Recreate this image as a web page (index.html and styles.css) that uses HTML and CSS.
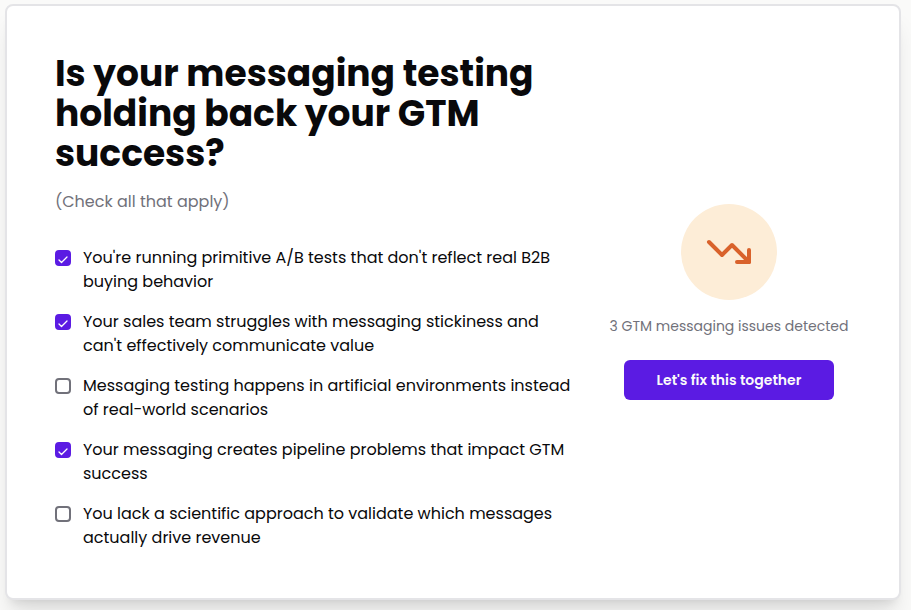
FILE: index.html
```html
<!DOCTYPE html>
<html lang="en">
<head>
    <meta charset="UTF-8">
    <meta name="viewport" content="width=device-width, initial-scale=1.0">
    <title>GTM messaging check</title>
    <link rel="stylesheet" href="styles.css">
</head>
<body>
    <main class="card">
        <section class="quiz">
            <h1>Is your messaging testing holding back your GTM success?</h1>
            <p class="hint">(Check all that apply)</p>

            <div class="options">
                <label class="option">
                    <input type="checkbox" checked>
                    <span>You're running primitive A/B tests that don't reflect real B2B buying behavior</span>
                </label>
                <label class="option">
                    <input type="checkbox" checked>
                    <span>Your sales team struggles with messaging stickiness and can't effectively communicate value</span>
                </label>
                <label class="option">
                    <input type="checkbox">
                    <span>Messaging testing happens in artificial environments instead of real-world scenarios</span>
                </label>
                <label class="option">
                    <input type="checkbox" checked>
                    <span>Your messaging creates pipeline problems that impact GTM success</span>
                </label>
                <label class="option">
                    <input type="checkbox">
                    <span>You lack a scientific approach to validate which messages actually drive revenue</span>
                </label>
            </div>
        </section>

        <aside class="result">
            <div class="result-icon">
                <svg width="48" height="48" viewBox="0 0 24 24" fill="none" stroke="currentColor" stroke-width="2" stroke-linecap="round" stroke-linejoin="round" aria-hidden="true">
                    <polyline points="22 17 13.5 8.5 8.5 13.5 2 7"></polyline>
                    <polyline points="16 17 22 17 22 11"></polyline>
                </svg>
            </div>
            <p class="result-text">3 GTM messaging issues detected</p>
            <button class="btn" type="button">Let's fix this together</button>
        </aside>
    </main>
</body>
</html>
```

FILE: styles.css
```css
* {
    box-sizing: border-box;
}
body {
    font-family: Poppins, Inter, "Liberation Sans", sans-serif;
    font-size: 16px;
    line-height: 24px;
    color: #09090b;
    background-color: #fafaf9;
    margin: 0;
    padding: 4px 10px 10px 5px;
}
h1 {
    font-size: 36px;
    line-height: 40px;
    font-weight: 700;
    margin: 0 0 16px;
}
p {
    margin: 0;
}
.card {
    display: grid;
    grid-template-columns: repeat(3, 1fr);
    gap: 32px;
    align-items: center;
    padding: 48px;
    background: #fff;
    border: 2px solid #e4e4e7;
    border-radius: 8px;
    box-shadow: 0 20px 25px -5px rgba(0, 0, 0, 0.1), 0 8px 10px -6px rgba(0, 0, 0, 0.1);
}
.quiz {
    grid-column: span 2;
}
.hint {
    color: #71717a;
    margin-bottom: 32px;
}
.options {
    display: flex;
    flex-direction: column;
    gap: 16px;
}
.option {
    display: flex;
    align-items: flex-start;
    gap: 12px;
    cursor: pointer;
}
.option input {
    appearance: none;
    flex-shrink: 0;
    width: 16px;
    height: 16px;
    margin: 4px 0 0;
    border: 2px solid #71717a;
    border-radius: 4px;
    cursor: pointer;
}
.option input:checked {
    border-color: #5b1be3;
    background: #5b1be3 url("data:image/svg+xml,%3Csvg xmlns='http://www.w3.org/2000/svg' viewBox='0 0 12 12' fill='none' stroke='white' stroke-width='1.3' stroke-linecap='round' stroke-linejoin='round'%3E%3Cpath d='M2 8l2.5 2.5L10 5'/%3E%3C/svg%3E") center / 12px no-repeat;
}
.result {
    display: flex;
    flex-direction: column;
    align-items: center;
}
.result-icon {
    display: flex;
    align-items: center;
    justify-content: center;
    width: 96px;
    height: 96px;
    margin-bottom: 16px;
    border-radius: 50%;
    color: #d9622b;
    background: #fdedd7;
}
.result-text {
    font-size: 14px;
    line-height: 20px;
    color: #71717a;
    margin-bottom: 24px;
}
.btn {
    height: 40px;
    padding: 0 33px;
    font-family: inherit;
    font-size: 14px;
    font-weight: 600;
    line-height: 20px;
    color: #fafafa;
    background: #5b1be3;
    border: none;
    border-radius: 6px;
    cursor: pointer;
}
```
